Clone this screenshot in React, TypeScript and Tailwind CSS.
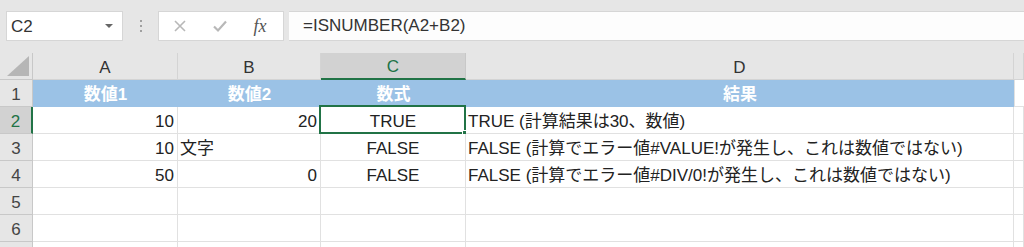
import React from "react";

const F = { fontFamily: '"Liberation Sans", "Noto Sans CJK JP", sans-serif' };

const cols = ["A", "B", "C", "D", ""];

type Cell = { t: string; a: "l" | "r" | "c" };
const rows: Cell[][] = [
  [
    { t: "10", a: "r" },
    { t: "20", a: "r" },
    { t: "TRUE", a: "c" },
    { t: "TRUE (計算結果は30、数値)", a: "l" },
    { t: "", a: "l" },
  ],
  [
    { t: "10", a: "r" },
    { t: "文字", a: "l" },
    { t: "FALSE", a: "c" },
    { t: "FALSE (計算でエラー値#VALUE!が発生し、これは数値ではない)", a: "l" },
    { t: "", a: "l" },
  ],
  [
    { t: "50", a: "r" },
    { t: "0", a: "r" },
    { t: "FALSE", a: "c" },
    { t: "FALSE (計算でエラー値#DIV/0!が発生し、これは数値ではない)", a: "l" },
    { t: "", a: "l" },
  ],
];

export default function App() {
  return (
    <div className="w-[1024px] h-[247px] overflow-hidden bg-[#e6e6e6] text-[#333]" style={F}>
      {/* Formula toolbar */}
      <div className="h-[53px] flex items-start pt-[11px] pl-[6px]">
        <div className="w-[117px] h-[30px] bg-white border border-[#d6d6d6] flex items-center pl-[4px] pr-[8px]">
          <span className="text-[17px] text-[#333] flex-1 pt-[2px]">C2</span>
          <svg width="10" height="6" viewBox="0 0 10 6">
            <path d="M1 1 L9 1 L5 5 Z" fill="#666" />
          </svg>
        </div>
        <div className="w-[35px] h-[30px] flex flex-col items-center justify-center gap-[3px]">
          <div className="w-[2px] h-[2px] bg-[#a0a0a0]" />
          <div className="w-[2px] h-[2px] bg-[#a0a0a0]" />
          <div className="w-[2px] h-[2px] bg-[#a0a0a0]" />
        </div>
        <div className="w-[126px] h-[30px] bg-white border border-[#d6d6d6] flex items-center">
          <div className="w-[40px] flex justify-center pl-[2px]">
            <svg width="14" height="14" viewBox="0 0 14 14">
              <path d="M2 2 L12 12 M12 2 L2 12" stroke="#b8b8b8" strokeWidth="1.6" />
            </svg>
          </div>
          <div className="w-[42px] flex justify-center">
            <svg width="16" height="14" viewBox="0 0 16 14">
              <path d="M2 7.5 L6 11.5 L14 2.5" stroke="#b8b8b8" strokeWidth="2.2" fill="none" />
            </svg>
          </div>
          <div className="flex-1 flex justify-center pr-[4px]">
            <span
              className="italic text-[18px] text-[#555] leading-none"
              style={{ fontFamily: '"Liberation Serif", serif' }}
            >
              fx
            </span>
          </div>
        </div>
        <div className="ml-[5px] flex-1 h-[30px] bg-[#fdfdfd] border-y border-[#d6d6d6] flex items-center pl-[14px]">
          <span className="text-[17px] text-[#333]">=ISNUMBER(A2+B2)</span>
        </div>
      </div>

      {/* Grid */}
      <div className="grid grid-cols-[33px_145px_143px_145px_548px_1fr] auto-rows-[27px]">
        {/* header row */}
        <div className="border-r border-b border-[#c8c8c8] flex items-end justify-end p-[2px]">
          <svg width="24" height="22" viewBox="0 0 24 22">
            <path d="M23 1 L23 21 L1 21 Z" fill="#b6b6b6" />
          </svg>
        </div>
        {cols.map((c, i) =>
          c === "C" ? (
            <div
              key={i}
              className="bg-[#d2d2d2] border-r border-[#c8c8c8] border-b-2 border-b-[#217346] flex items-center justify-center pt-[3px] text-[17px] text-[#217346]"
            >
              {c}
            </div>
          ) : (
            <div
              key={i}
              className="border-r border-b border-[#d4d4d4] flex items-center justify-center pt-[3px] text-[17px] text-[#333]"
            >
              {c}
            </div>
          )
        )}

        {/* row 1 */}
        <div className="border-r border-b border-[#c8c8c8] flex items-center justify-center pt-[3px] text-[17px] text-[#444]">
          1
        </div>
        {["数値1", "数値2", "数式", "結果"].map((t, i) => (
          <div
            key={i}
            className="bg-[#9bc2e6] border-b border-[#9bc2e6] flex items-center justify-center pt-[3px] text-[17px] font-bold text-white"
          >
            {t}
          </div>
        ))}
        <div className="bg-white border-l border-b border-[#e1e1e1]" />

        {rows.map((r, ri) => {
          const n = ri + 2;
          const sel = n === 2;
          return (
            <React.Fragment key={ri}>
              <div
                className={
                  sel
                    ? "bg-[#d2d2d2] border-r-2 border-r-[#217346] border-b border-b-[#c8c8c8] flex items-center justify-center pt-[3px] text-[17px] text-[#217346]"
                    : "border-r border-b border-[#c8c8c8] flex items-center justify-center pt-[3px] text-[17px] text-[#444]"
                }
              >
                {n}
              </div>
              {r.map((c, ci) => {
                const isSel = sel && ci === 2;
                return (
                  <div
                    key={ci}
                    className={
                      "relative bg-white border-r border-b border-[#e1e1e1] flex items-center pt-[3px] whitespace-nowrap text-[17px] text-[#222] " +
                      (c.a === "r" ? "justify-end pr-[3px]" : c.a === "c" ? "justify-center" : "justify-start pl-[2px]")
                    }
                  >
                    {c.t}
                    {isSel && (
                      <>
                        <div className="absolute left-[-2px] top-[-2px] right-[-1px] bottom-[-1px] border-2 border-[#217346]" />
                        <div className="absolute right-[-3px] bottom-[-3px] w-[6px] h-[6px] bg-[#217346] border border-white" />
                      </>
                    )}
                  </div>
                );
              })}
            </React.Fragment>
          );
        })}

        {[5, 6, 7].map((n) => (
          <React.Fragment key={n}>
            <div className="border-r border-b border-[#c8c8c8] flex items-center justify-center pt-[3px] text-[17px] text-[#444]">
              {n === 7 ? "" : n}
            </div>
            {[0, 1, 2, 3, 4].map((ci) => (
              <div key={ci} className="bg-white border-r border-b border-[#e1e1e1]" />
            ))}
          </React.Fragment>
        ))}
      </div>
    </div>
  );
}
